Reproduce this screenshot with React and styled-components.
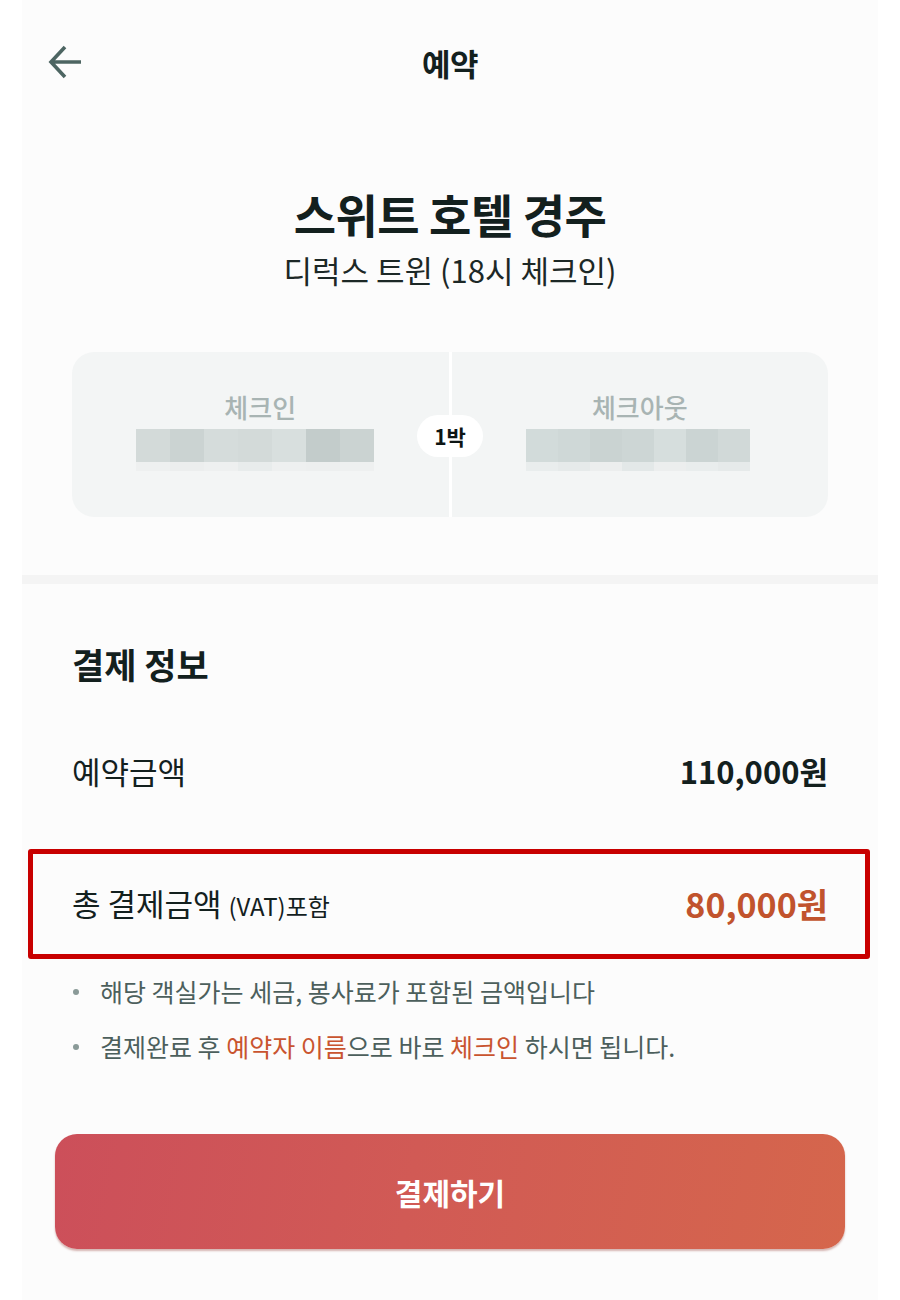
import React from "react";
import styled, { createGlobalStyle } from "styled-components";

const GlobalStyle = createGlobalStyle`
  * { box-sizing: border-box; }
  body {
    margin: 0;
    background: #ffffff;
    font-family: "Noto Sans CJK KR", "Noto Sans", sans-serif;
    color: #13201e;
  }
`;

const checkInCells = ["#d3dad9", "#cbd3d2", "#d5dcdb", "#d3dad9", "#d8dfde", "#c3cccb", "#cbd3d2"];
const checkInShade = ["#eef0f0", "#eceeee", "#eef0f0", "#e8ecec", "#eef0f0", "#edefef", "#eef0f0"];
const checkOutCells = ["#d2dbda", "#cfd8d7", "#cad3d2", "#cdd6d5", "#d6dedd", "#cbd4d3", "#d1d9d8"];
const checkOutShade = ["#e9eded", "#e6eaea", "#eceeee", "#e3e8e8", "#eceeee", "#e9eded", "#e6eaea"];

function Mosaic({ cells, shade, cellWidth, shift }) {
  return (
    <MosaicBox $shift={shift}>
      <MosaicRow>
        {cells.map((c, i) => (
          <Cell key={i} $color={c} $w={cellWidth} $h={33} />
        ))}
      </MosaicRow>
      <MosaicRow>
        {shade.map((c, i) => (
          <Cell key={i} $color={c} $w={cellWidth} $h={9} />
        ))}
      </MosaicRow>
    </MosaicBox>
  );
}

export default function App() {
  return (
    <>
      <GlobalStyle />
      <Page>
        <Header>
          <BackButton aria-label="뒤로">
            <svg width="36" height="36" viewBox="0 0 36 36" fill="none">
              <path
                d="M33 18H4M17 3L3 18l14 15"
                stroke="#4d6562"
                strokeWidth="3.6"
                strokeLinecap="butt"
                strokeLinejoin="miter"
              />
            </svg>
          </BackButton>
          <HeaderTitle>예약</HeaderTitle>
          <span />
        </Header>

        <Hero>
          <HotelName>스위트 호텔 경주</HotelName>
          <RoomName>디럭스 트윈 (18시 체크인)</RoomName>
        </Hero>

        <DateCard>
          <DateHalf>
            <DateLabel>체크인</DateLabel>
            <Mosaic cells={checkInCells} shade={checkInShade} cellWidth={34} shift={-5} />
          </DateHalf>
          <Split />
          <DateHalf>
            <DateLabel>체크아웃</DateLabel>
            <Mosaic cells={checkOutCells} shade={checkOutShade} cellWidth={32} shift={-2} />
          </DateHalf>
          <Nights>1박</Nights>
        </DateCard>

        <Band />

        <Payment>
          <SectionTitle>결제 정보</SectionTitle>
          <PriceRow>
            <PriceLabel>예약금액</PriceLabel>
            <PriceValue>110,000원</PriceValue>
          </PriceRow>
          <TotalRow>
            <PriceLabel>
              총 결제금액 <Small>(VAT)포함</Small>
            </PriceLabel>
            <PriceValue $accent>80,000원</PriceValue>
          </TotalRow>
          <Notes>
            <Note>해당 객실가는 세금, 봉사료가 포함된 금액입니다</Note>
            <Note>
              결제완료 후 <Mark>예약자 이름</Mark>으로 바로 <Mark>체크인</Mark> 하시면 됩니다.
            </Note>
          </Notes>
        </Payment>

        <PayButton>결제하기</PayButton>
      </Page>
    </>
  );
}

const Page = styled.div`
  margin: 0 22px;
  min-height: 1300px;
  background: #fcfcfc;
  display: flex;
  flex-direction: column;
  overflow: hidden;
`;

const Header = styled.header`
  height: 124px;
  display: grid;
  grid-template-columns: 1fr auto 1fr;
  align-items: center;
  padding: 0 26px;
`;

const BackButton = styled.button`
  width: 36px;
  height: 36px;
  padding: 0;
  border: none;
  background: none;
  display: flex;
  align-items: center;
  justify-content: center;
  cursor: pointer;
`;

const HeaderTitle = styled.h1`
  margin: 0;
  font-size: 31px;
  font-weight: 700;
  line-height: 1;
  letter-spacing: -0.5px;
`;

const Hero = styled.section`
  display: flex;
  flex-direction: column;
  align-items: center;
  margin-top: 59px;
`;

const HotelName = styled.h2`
  margin: 0;
  font-size: 46px;
  font-weight: 700;
  line-height: 60px;
  letter-spacing: -0.5px;
`;

const RoomName = styled.p`
  margin: 7px 0 0;
  font-size: 31px;
  font-weight: 400;
  line-height: 40px;
  color: #1c2826;
`;

const DateCard = styled.div`
  position: relative;
  margin: 62px 50px 0;
  height: 165px;
  border-radius: 22px;
  background: #f3f5f5;
  display: flex;
`;

const DateHalf = styled.div`
  flex: 1;
  display: flex;
  flex-direction: column;
  align-items: center;
  padding-top: 39px;
`;

const Split = styled.div`
  width: 3px;
  background: #ffffff;
`;

const DateLabel = styled.div`
  font-size: 26px;
  font-weight: 500;
  line-height: 32px;
  color: #a8b4b3;
  margin-bottom: 6px;
`;

const MosaicBox = styled.div`
  display: flex;
  flex-direction: column;
  transform: translateX(${(p) => p.$shift || 0}px);
`;

const MosaicRow = styled.div`
  display: flex;
`;

const Cell = styled.div`
  width: ${(p) => p.$w}px;
  height: ${(p) => p.$h}px;
  background: ${(p) => p.$color};
`;

const Nights = styled.div`
  position: absolute;
  left: 50%;
  top: 84px;
  transform: translate(-50%, -50%);
  width: 66px;
  height: 42px;
  border-radius: 21px;
  background: #ffffff;
  display: flex;
  align-items: center;
  justify-content: center;
  font-size: 21px;
  font-weight: 700;
  color: #0d1514;
`;

const Band = styled.div`
  margin-top: 58px;
  height: 9px;
  background: #f4f4f4;
`;

const Payment = styled.section`
  display: flex;
  flex-direction: column;
  padding-top: 59px;
`;

const SectionTitle = styled.h3`
  margin: 0 50px;
  font-size: 35px;
  font-weight: 700;
  line-height: 42px;
`;

const PriceRow = styled.div`
  margin: 66px 50px 0;
  height: 40px;
  display: flex;
  align-items: center;
  justify-content: space-between;
`;

const TotalRow = styled.div`
  margin: 58px 8px 0 6px;
  height: 110px;
  border: 5px solid #c80000;
  border-radius: 3px;
  padding: 0 37px 0 39px;
  display: flex;
  align-items: center;
  justify-content: space-between;
`;

const PriceLabel = styled.span`
  font-size: 31px;
  font-weight: 400;
  line-height: 40px;
  color: #13201e;
`;

const Small = styled.span`
  font-size: 24px;
`;

const PriceValue = styled.span`
  font-size: ${(p) => (p.$accent ? 34 : 31)}px;
  font-weight: 700;
  line-height: 40px;
  color: ${(p) => (p.$accent ? "#c1532d" : "#13201e")};
`;

const Notes = styled.ul`
  list-style: none;
  margin: 15px 50px 0;
  padding: 0;
  display: flex;
  flex-direction: column;
  gap: 21px;
`;

const Note = styled.li`
  position: relative;
  padding-left: 28px;
  font-size: 25px;
  line-height: 34px;
  color: #4c5f5c;
  &::before {
    content: "";
    position: absolute;
    left: 1px;
    top: 15px;
    width: 6px;
    height: 6px;
    border-radius: 50%;
    background: #8a9a98;
  }
`;

const Mark = styled.span`
  color: #c9542f;
`;

const PayButton = styled.button`
  margin: 71px 33px 0;
  height: 115px;
  border: none;
  border-radius: 22px;
  background: linear-gradient(100deg, #cc4f5a 0%, #d15a55 45%, #d5664c 100%);
  box-shadow: 0 2px 2px rgba(140, 50, 40, 0.35);
  color: #ffffff;
  font-family: inherit;
  font-size: 30px;
  font-weight: 700;
  cursor: pointer;
`;
